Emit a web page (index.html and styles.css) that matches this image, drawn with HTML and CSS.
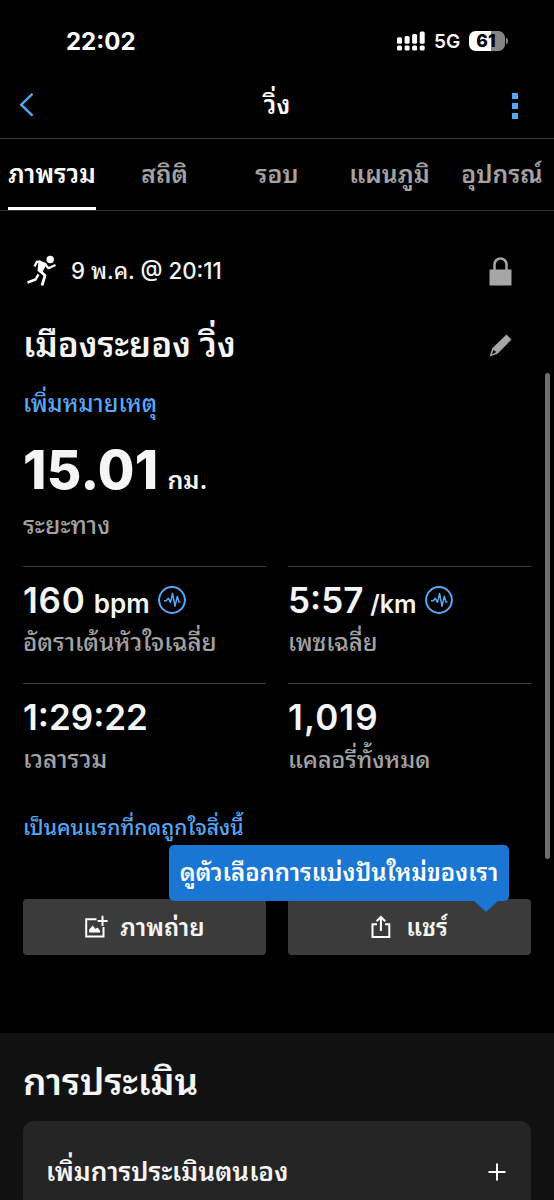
FILE: index.html
```html
<!DOCTYPE html>
<html lang="th">
<head>
<meta charset="utf-8">
<title>วิ่ง</title>
<link rel="stylesheet" href="styles.css">
</head>
<body>
<div class="screen">
  <div class="statusbar">
    <span class="clock">22:02</span>
    <div class="status-right">
      <svg class="signal" width="28" height="20" viewBox="0 0 28 20" fill="#fff">
        <rect x="0" y="6.3" width="5" height="6.4" rx="1.5"/><rect x="7.6" y="5" width="5" height="7.7" rx="1.5"/><rect x="15.1" y="3" width="5" height="9.7" rx="1.5"/><rect x="22.7" y="0.5" width="5" height="12.2" rx="1.5"/>
        <rect x="0" y="14.6" width="5" height="5" rx="1.5"/><rect x="7.6" y="14.6" width="5" height="5" rx="1.5"/><rect x="15.1" y="14.6" width="5" height="5" rx="1.5"/><rect x="22.7" y="14.6" width="5" height="5" rx="1.5"/>
      </svg>
      <span class="network">5G</span>
      <div class="battery"><span class="level">61</span><span class="battery-tip"></span></div>
    </div>
  </div>
  <div class="navbar">
    <svg class="back" width="16" height="26" viewBox="0 0 16 26" fill="none" stroke="#56a8f5" stroke-width="2.4"><path d="M14.500 1.800 3.200 12.700 14.500 23.600"/></svg>
    <h1 class="nav-title">วิ่ง</h1>
    <div class="more"><i></i><i></i><i></i></div>
  </div>
  <nav class="tabs">
    <a class="tab active"><span>ภาพรวม</span></a>
    <a class="tab"><span>สถิติ</span></a>
    <a class="tab"><span>รอบ</span></a>
    <a class="tab"><span>แผนภูมิ</span></a>
    <a class="tab"><span>อุปกรณ์</span></a>
  </nav>
  <main class="overview">
    <div class="date-row">
      <svg class="runner" width="30" height="32" viewBox="0 0 30 32" fill="none" stroke="#fff" stroke-linejoin="round">
        <circle cx="23.200" cy="4.500" r="3.700" fill="#fff" stroke="none"/>
        <path d="M12.500 6.400 18.500 9 14.300 17.400 11.500 15.500Z" fill="#fff" stroke-width="2"/>
        <path d="M14 6.800 10 6.600 7.500 11.500" stroke-width="2.300"/>
        <path d="M18.400 9.500 21.400 13.200 28.500 10" stroke-width="2.300"/>
        <path d="M13.200 16 18 20.600 15 30.500" stroke-width="2.800"/>
        <path d="M11.500 19.300 8.600 24.500 .5 27.500" stroke-width="2.400"/>
      </svg>
      <span class="date">9 พ.ค. @ 20:11</span>
      <svg class="lock" width="23" height="29" viewBox="0 0 23 29"><path d="M.5 12.500h22v16H.5Z" fill="#a6a6a6"/><path d="M5.500 13V7.500a6 6 0 0 1 12 0V13" fill="none" stroke="#a6a6a6" stroke-width="2.500"/></svg>
    </div>
    <div class="name-row">
      <h2 class="name">เมืองระยอง วิ่ง</h2>
      <svg class="pencil" width="23" height="23" viewBox="0 0 23 23"><path fill="#a6a6a6" fill-rule="evenodd" d="M17.500.5 22.500 5.500 8.500 19.700.5 22.500 3.300 14.300ZM4.600 16 2.800 20.500 6.800 18.600 6.300 17Z"/></svg>
    </div>
    <a class="note">เพิ่มหมายเหตุ</a>
    <div class="distance"><span class="distance-value">15.01</span><span class="distance-unit">กม.</span></div>
    <div class="label distance-label">ระยะทาง</div>
    <div class="stats">
      <div class="stat">
        <div class="value"><b class="heart">160</b><small class="bpm">bpm</small>
          <svg class="pulse" width="28" height="28" viewBox="0 0 28 28" fill="none" stroke="#56a8f5"><circle cx="14" cy="14" r="12.900" stroke-width="2"/><path d="M6 14.800h2.300l2-2.500 2.200 4L14.500 7.500 17 20.200 19.300 10.300 21 16h1.500" stroke-width="1.500" stroke-linejoin="round"/></svg>
        </div>
        <div class="label label-heart">อัตราเต้นหัวใจเฉลี่ย</div>
      </div>
      <div class="stat">
        <div class="value"><b>5:57</b><small class="km">/km</small>
          <svg class="pulse" width="28" height="28" viewBox="0 0 28 28" fill="none" stroke="#56a8f5"><circle cx="14" cy="14" r="12.900" stroke-width="2"/><path d="M6 14.800h2.300l2-2.500 2.200 4L14.500 7.500 17 20.200 19.300 10.300 21 16h1.500" stroke-width="1.500" stroke-linejoin="round"/></svg>
        </div>
        <div class="label label-pace">เพซเฉลี่ย</div>
      </div>
      <div class="stat">
        <div class="value"><b>1:29:22</b></div>
        <div class="label">เวลารวม</div>
      </div>
      <div class="stat">
        <div class="value"><b class="calories">1,019</b></div>
        <div class="label label-calories">แคลอรี่ทั้งหมด</div>
      </div>
    </div>
    <a class="like">เป็นคนแรกที่กดถูกใจสิ่งนี้</a>
    <div class="actions">
      <div class="button">
        <svg width="24" height="24" viewBox="0 0 24 24" fill="none" stroke="#fff" stroke-width="2"><path d="M12.500 4.200H2.200V21.600H19.500V12M18.500.8V11M13.600 6H23.600"/><path d="M5.200 17.500V14.500L8.600 10.500 11.500 14 13.400 12.500 16 15.500V17.500Z" fill="#fff" stroke="none"/></svg>
        <span>ภาพถ่าย</span>
      </div>
      <div class="button share">
        <svg width="20" height="24" viewBox="0 0 20 24" fill="none" stroke="#fff" stroke-width="2"><path d="M6 9.200H1.500V22H18.300V9.200H14M9.900 16V2M5.600 6.300 9.900 2 14.200 6.300"/></svg>
        <span>แชร์</span>
      </div>
      <div class="tooltip"><span>ดูตัวเลือกการแบ่งปันใหม่ของเรา</span></div>
    </div>
  </main>
  <section class="evaluation">
    <h2>การประเมิน</h2>
    <div class="card">
      <span>เพิ่มการประเมินตนเอง</span>
      <svg width="18" height="18" viewBox="0 0 18 18" stroke="#fff" stroke-width="2"><path d="M9 .5V17.500M.5 9H17.500"/></svg>
    </div>
  </section>
  <div class="scrollbar"></div>
</div>
</body>
</html>
```
FILE: styles.css
```css
* { box-sizing: border-box; }
body { margin: 0; background: #000; color: #f5f5f5; font-family: Inter, "Noto Sans Thai Looped", "Noto Looped Thai", "Noto Sans Thai", "Noto Sans", sans-serif; font-size: 22px; font-weight: 500; }
h1, h2 { margin: 0; }
svg { display: block; flex: none; }
span, a, .label, h1, h2, b, small { white-space: nowrap; }
.screen { position: relative; width: 554px; height: 1200px; overflow: hidden; }

.statusbar { height: 72px; padding: 10px 49px 0 66px; display: flex; justify-content: space-between; align-items: center; color: #fff; }
.clock { font-size: 24px; font-weight: 700; }
.status-right { display: flex; align-items: center; }
.network { font-size: 19px; font-weight: 600; margin-left: 9px; width: 26px; padding-top: 1px; }
.battery { position: relative; width: 36px; height: 20px; margin-left: 9px; border-radius: 6.500px; background: linear-gradient(90deg, #fff 61%, #858585 61%); text-align: center; }
.level { display: block; font-size: 17.500px; line-height: 20px; font-weight: 800; color: #000; padding-right: 2px; }
.battery-tip { position: absolute; right: -3px; top: 7px; width: 2px; height: 6px; border-radius: 0 2px 2px 0; background: #858585; }

.navbar { height: 67px; padding: 0 36px 0 18px; border-bottom: 1px solid #3c3c3c; display: grid; grid-template-columns: 60px 1fr 42px; align-items: center; }
.nav-title { font-size: 25.500px; line-height: 40px; font-weight: 600; text-align: center; color: #fff; }
.more { justify-self: end; display: grid; gap: 4px; padding-top: 2px; }
.more i { width: 6px; height: 6px; background: #56a8f5; }

.tabs { height: 72px; border-bottom: 1px solid #343434; display: grid; grid-template-columns: repeat(5, 88px); column-gap: 24.500px; padding-left: 8px; color: #a3a3a3; font-size: 24.700px; font-weight: 600; }
.tab { display: flex; justify-content: center; line-height: 70px; }
.tab.active { color: #fff; font-size: 25.600px; box-shadow: inset 0 -3px #fff; }

.overview { padding: 34px 23px 0; }
.date-row { height: 52px; display: flex; align-items: center; }
.runner { margin-left: 4px; }
.date { margin-left: 14px; flex: 1; font-size: 22.300px; line-height: 40px; }
.lock, .pencil { margin-right: 19px; }
.name-row { height: 97px; display: flex; align-items: center; justify-content: space-between; }
.name { font-size: 34.800px; line-height: 58px; padding-bottom: 3px; font-weight: 600; }
.note, .like { display: block; color: #56a8f5; }
.note { height: 26px; line-height: 20px; font-size: 23.600px; }
.distance { height: 94px; display: flex; align-items: baseline; line-height: 100px; }
.distance-value { font-size: 53px; font-weight: 800; letter-spacing: .3px; }
.distance-unit { font-size: 25px; font-weight: 600; margin-left: 9px; }
.label { color: #a3a3a3; font-size: 24.700px; height: 30px; line-height: 31px; }
.distance-label { margin-top: -4px; }
.label-heart { font-size: 24.200px; }
.label-pace { font-size: 23.600px; }
.label-calories { font-size: 23.400px; }
.stats { display: grid; grid-template-columns: 243px 243px; justify-content: space-between; margin-top: 26px; }
.stat { height: 117px; border-top: 1px solid #3b3b3b; padding-top: 9px; }
.value { height: 51px; line-height: 48px; display: flex; align-items: baseline; }
.value b { font-size: 35px; font-weight: 600; }
.value .heart { letter-spacing: .8px; }
.value .calories { letter-spacing: 1.100px; }
.value small { font-size: 26px; font-weight: 600; margin-left: 8px; }
.value .km { font-size: 25px; margin-left: 7px; }
.pulse { margin-left: 8.500px; align-self: flex-start; margin-top: 10px; }
.like { margin-top: 13px; height: 30px; line-height: 30px; font-size: 21.100px; }
.actions { position: relative; margin-top: 56px; display: flex; justify-content: space-between; }
.button { width: 243px; height: 56px; border-radius: 4px; background: #3b3b3b; display: flex; align-items: center; justify-content: center; gap: 12px; font-size: 24.300px; line-height: 56px; font-weight: 600; }
.share { gap: 15px; }
.tooltip { position: absolute; right: 22px; top: -54px; width: 340px; height: 56px; border-radius: 5px; background: #1976d2; color: #fff; line-height: 56px; text-align: center; font-size: 23.900px; font-weight: 600; }
.tooltip::after { content: ""; position: absolute; right: 10px; top: 55px; border: 13px solid transparent; border-top: 12px solid #1976d2; border-bottom: 0; }

.evaluation { margin-top: 78px; padding: 25px 23px 0; height: 180px; background: #111; }
.evaluation h2 { font-size: 37px; line-height: 48px; font-weight: 600; }
.card { margin-top: 15px; height: 102px; border-radius: 11px; background: #252525; padding: 0 25px 0 23px; display: flex; align-items: center; justify-content: space-between; font-size: 26.200px; line-height: 40px; font-weight: 600; }
.scrollbar { position: absolute; left: 545px; top: 373px; width: 5px; height: 486px; border-radius: 3px; background: #707070; }
```
